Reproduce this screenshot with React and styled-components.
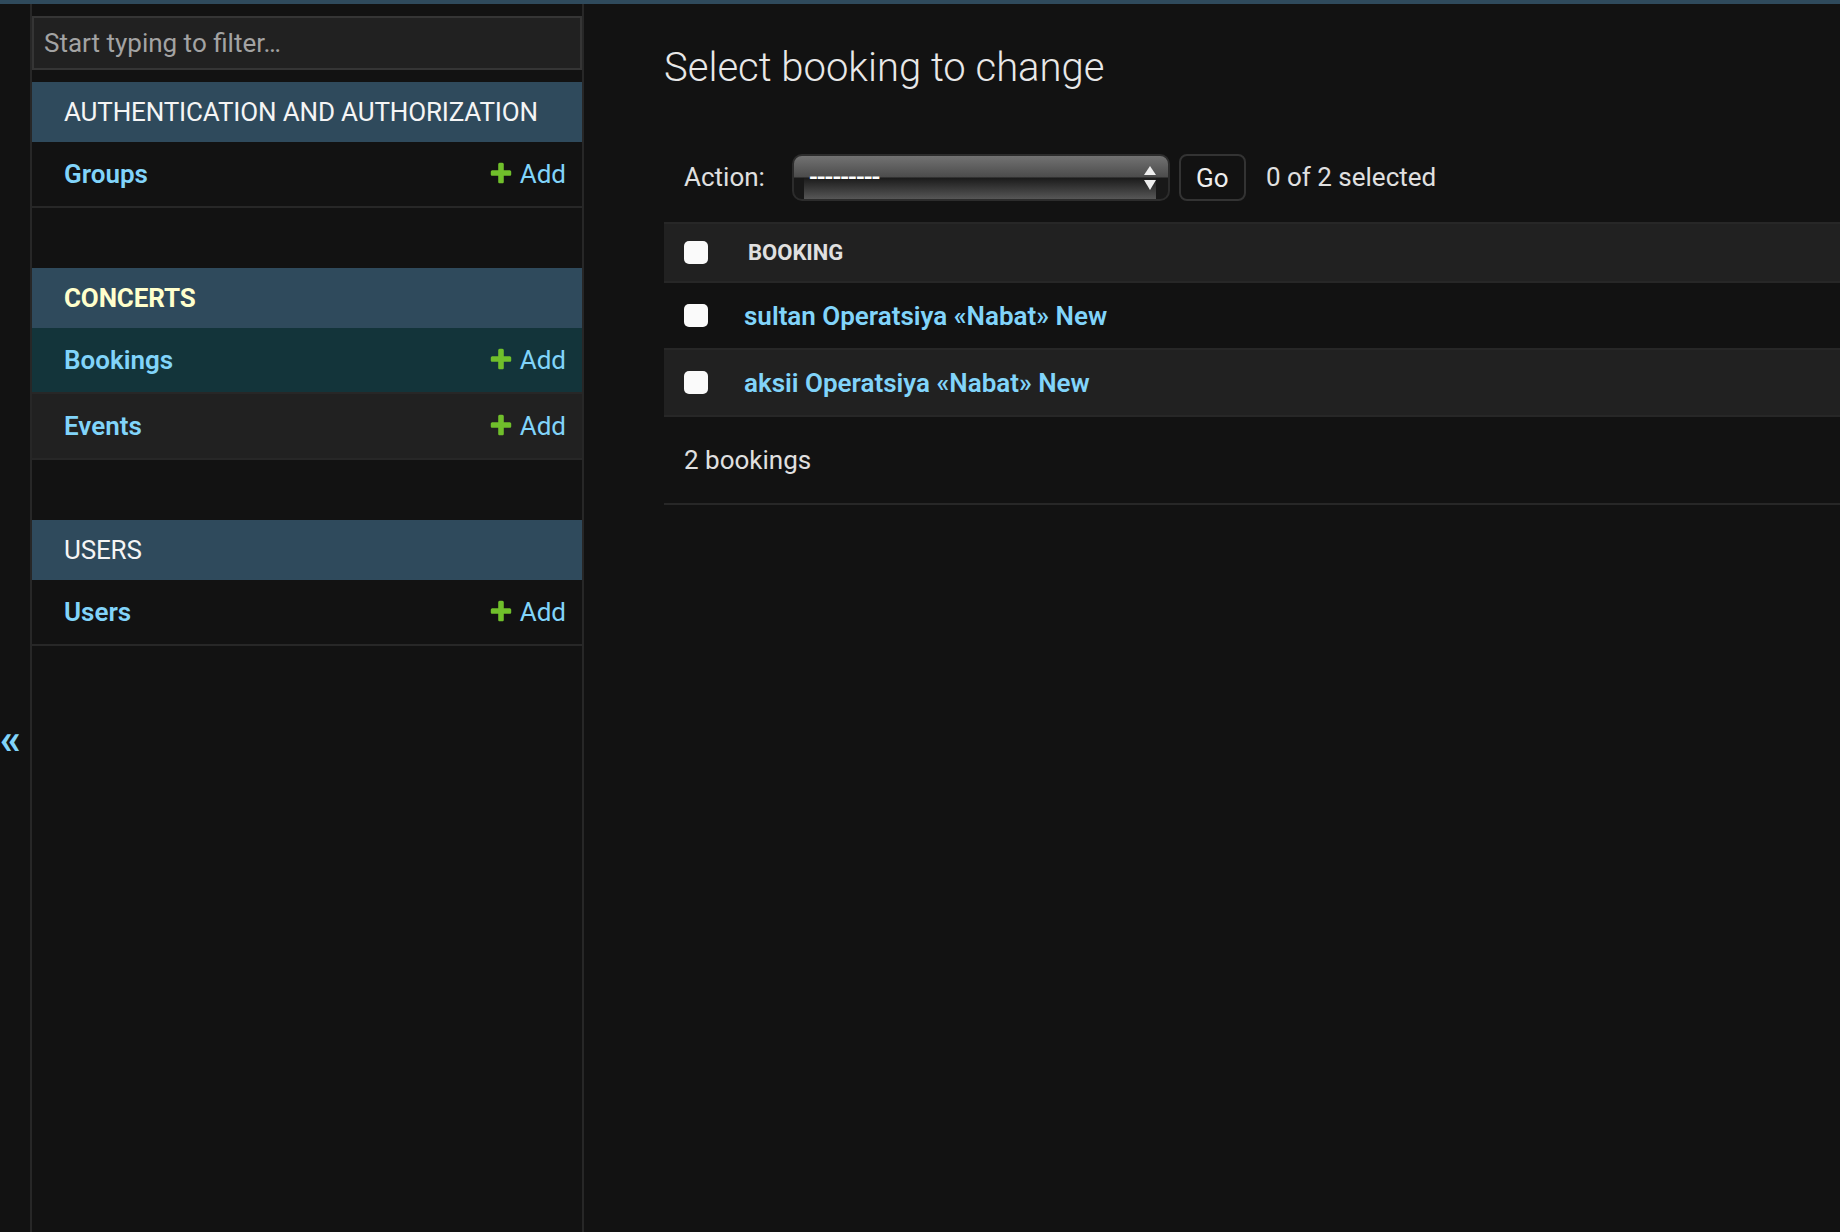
import React from "react";
import styled, { createGlobalStyle } from "styled-components";

const GlobalStyle = createGlobalStyle`
  html, body {
    margin: 0;
    padding: 0;
    background: #121212;
  }

  body {
    font-family: Roboto, "Liberation Sans", sans-serif;
    color: #eeeeee;
    overflow: hidden;
  }

  * {
    box-sizing: border-box;
  }
`;

const TopBar = styled.div`
  height: 4px;
  background: #2f4a5c;
`;

const Layout = styled.div`
  display: flex;
  height: calc(100vh - 4px);
`;

const SidebarToggle = styled.button`
  flex: 0 0 32px;
  display: flex;
  justify-content: flex-start;
  align-items: flex-start;
  margin: 0;
  padding: 715px 0 0 0;
  border: 0;
  border-right: 2px solid #272727;
  background: #121212;
  color: #81d4fa;
  font: 700 42px/1 Roboto, sans-serif;
  overflow: hidden;
  cursor: pointer;
`;

const Sidebar = styled.nav`
  flex: 0 0 552px;
  padding-top: 12px;
  border-right: 2px solid #272727;
  background: #121212;
`;

const FilterInput = styled.input`
  display: block;
  width: 100%;
  height: 54px;
  margin: 0 0 12px;
  padding: 0 10px;
  border: 2px solid #353535;
  border-radius: 0;
  background: #212121;
  color: #eeeeee;
  font: 26px Roboto, sans-serif;
  outline: none;

  &::placeholder {
    color: #a3a3a3;
  }
`;

const Module = styled.section`
  margin-bottom: 60px;
`;

const Caption = styled.div`
  display: flex;
  align-items: center;
  height: 60px;
  padding-left: 32px;
  background: #2f4a5c;
  font-size: 26px;
  letter-spacing: -0.15px;
  font-weight: ${(p) => (p.$current ? 700 : 400)};
  color: ${(p) => (p.$current ? "#ffffcc" : "#f5f5f5")};
`;

const rowBg = { plain: "#121212", alt: "#212121", selected: "#13343a" };

const ModelRow = styled.div`
  display: flex;
  align-items: center;
  justify-content: space-between;
  height: 66px;
  padding: 0 16px 0 32px;
  border-bottom: 2px solid #272727;
  background: ${(p) => rowBg[p.$tone || "plain"]};
`;

const ModelLink = styled.a`
  color: #81d4fa;
  font-size: 26px;
  font-weight: 600;
  text-decoration: none;
`;

const AddLink = styled.a`
  display: inline-flex;
  align-items: center;
  color: #81d4fa;
  font-size: 26px;
  text-decoration: none;

  & svg {
    width: 26px;
    height: 26px;
    margin-right: 6px;
  }
`;

const Content = styled.main`
  flex: 1;
  min-width: 0;
  padding: 40px 0 0 80px;
  overflow: hidden;
`;

const Title = styled.h1`
  margin: 0 0 42px;
  font-size: 40px;
  font-weight: 300;
  line-height: 48px;
  color: #e8e8e8;
`;

const Actions = styled.div`
  display: flex;
  align-items: center;
  padding: 20px 20px 21px;
  font-size: 26px;
  line-height: 47px;
  color: #e0e0e0;
`;

const ActionLabel = styled.label`
  margin-right: 27px;
`;

const SelectBox = styled.div`
  display: flex;
  align-items: center;
  justify-content: space-between;
  width: 378px;
  height: 47px;
  padding: 0 11px 0 15px;
  border: 2px solid #2c2c2c;
  border-radius: 10px;
  background-color: #181818;
  background-image: linear-gradient(#727272, #4b4b4b),
    linear-gradient(#1b1b1b, #585858);
  background-size: 100% 50%, calc(100% - 22px) 50%;
  background-position: 0 0, 10px 100%;
  background-repeat: no-repeat;
  color: #ffffff;
  font-weight: 500;

  & span {
    letter-spacing: -1px;
  }
`;

const GoButton = styled.button`
  width: 67px;
  height: 47px;
  margin-left: 9px;
  padding: 0;
  border: 2px solid #333333;
  border-radius: 8px;
  background: #121212;
  color: #eeeeee;
  font: 26px Roboto, sans-serif;
`;

const Counter = styled.span`
  margin-left: 20px;
`;

const HeadRow = styled.div`
  display: flex;
  align-items: center;
  height: 61px;
  padding-left: 20px;
  border-top: 2px solid #272727;
  border-bottom: 2px solid #272727;
  background: #212121;
`;

const ResultRow = styled.div`
  display: flex;
  align-items: center;
  height: 67px;
  padding-left: 20px;
  border-bottom: 2px solid #272727;
  background: ${(p) => (p.$alt ? "#212121" : "#121212")};
`;

const Check = styled.input.attrs({ type: "checkbox" })`
  appearance: none;
  flex: 0 0 24px;
  width: 24px;
  height: 23px;
  margin: 0;
  border: 0;
  border-radius: 5px;
  background: #fafafa;
`;

const HeadLabel = styled.span`
  margin-left: 40px;
  font-size: 22px;
  font-weight: 700;
  text-transform: uppercase;
  color: #e0e0e0;
`;

const ResultLink = styled.a`
  margin-left: 36px;
  color: #81d4fa;
  font-size: 26px;
  font-weight: 600;
  text-decoration: none;
`;

const Paginator = styled.p`
  display: flex;
  align-items: center;
  height: 88px;
  margin: 0;
  padding-left: 20px;
  border-bottom: 2px solid #272727;
  font-size: 26px;
  color: #e0e0e0;
`;

const PlusIcon = () => (
  <svg viewBox="0 0 1792 1792">
    <path
      fill="#70bf2b"
      d="M1600 736v192q0 40-28 68t-68 28h-416v416q0 40-28 68t-68 28h-192q-40 0-68-28t-28-68v-416h-416q-40 0-68-28t-28-68v-192q0-40 28-68t68-28h416v-416q0-40 28-68t68-28h192q40 0 68 28t28 68v416h416q40 0 68 28t28 68z"
    />
  </svg>
);

const SelectArrows = () => (
  <svg width="14" height="26" viewBox="0 0 14 26">
    <path fill="#eeeeee" d="M7 1 L13 10 L1 10 Z" />
    <path fill="#eeeeee" d="M1 15 L13 15 L7 25 Z" />
  </svg>
);

const apps = [
  {
    name: "Authentication and Authorization",
    models: [{ name: "Groups" }],
  },
  {
    name: "Concerts",
    current: true,
    models: [{ name: "Bookings", selected: true }, { name: "Events" }],
  },
  {
    name: "Users",
    models: [{ name: "Users" }],
  },
];

const bookings = [
  "sultan Operatsiya «Nabat» New",
  "aksii Operatsiya «Nabat» New",
];

export default function App() {
  return (
    <>
      <GlobalStyle />
      <TopBar />
      <Layout>
        <SidebarToggle aria-label="Toggle navigation">«</SidebarToggle>
        <Sidebar>
          <FilterInput placeholder="Start typing to filter…" />
          {apps.map((app) => (
            <Module key={app.name}>
              <Caption $current={app.current}>{app.name.toUpperCase()}</Caption>
              {app.models.map((model, i) => (
                <ModelRow
                  key={model.name}
                  $tone={model.selected ? "selected" : i % 2 ? "alt" : "plain"}
                >
                  <ModelLink href="#">{model.name}</ModelLink>
                  <AddLink href="#">
                    <PlusIcon />
                    Add
                  </AddLink>
                </ModelRow>
              ))}
            </Module>
          ))}
        </Sidebar>
        <Content>
          <Title>Select booking to change</Title>
          <Actions>
            <ActionLabel>Action:</ActionLabel>
            <SelectBox>
              <span>---------</span>
              <SelectArrows />
            </SelectBox>
            <GoButton>Go</GoButton>
            <Counter>0 of 2 selected</Counter>
          </Actions>
          <HeadRow>
            <Check />
            <HeadLabel>Booking</HeadLabel>
          </HeadRow>
          {bookings.map((b, i) => (
            <ResultRow key={b} $alt={i % 2 === 1}>
              <Check />
              <ResultLink href="#">{b}</ResultLink>
            </ResultRow>
          ))}
          <Paginator>2 bookings</Paginator>
        </Content>
      </Layout>
    </>
  );
}
